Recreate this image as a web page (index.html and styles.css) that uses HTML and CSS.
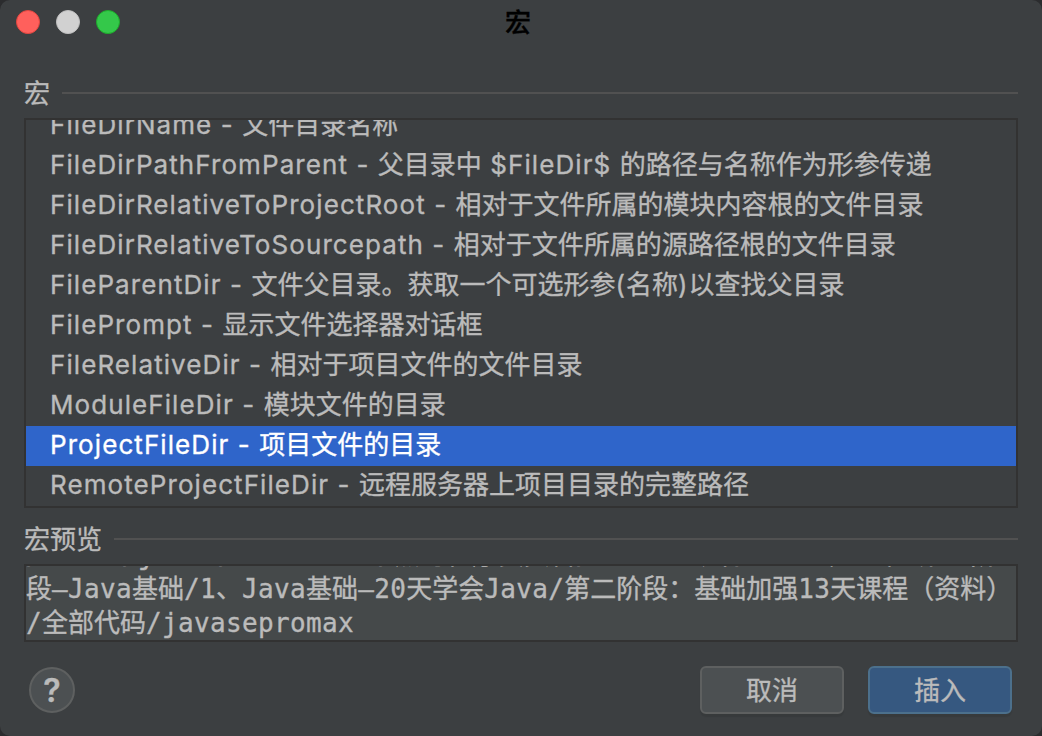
FILE: index.html
```html
<!DOCTYPE html>
<html lang="zh-CN">

<head>
    <meta charset="UTF-8">
    <meta name="viewport" content="width=device-width, initial-scale=1.0">
    <title>宏</title>
    <link rel="stylesheet" href="styles.css">
</head>

<body>
    <div class="dialog">
        <div class="titlebar">
            <div class="lights">
                <span class="light close"></span>
                <span class="light minimize"></span>
                <span class="light zoom"></span>
            </div>
            <h1>宏</h1>
        </div>

        <div class="section-title"><h2>宏</h2></div>
        <ul class="macro-list">
            <li><span class="name">FileDirName - </span>文件目录名称</li>
            <li><span class="name">FileDirPathFromParent - </span>父目录中<span class="name"> $FileDir$ </span>的路径与名称作为形参传递</li>
            <li><span class="name">FileDirRelativeToProjectRoot - </span>相对于文件所属的模块内容根的文件目录</li>
            <li><span class="name">FileDirRelativeToSourcepath - </span>相对于文件所属的源路径根的文件目录</li>
            <li><span class="name">FileParentDir - </span>文件父目录。获取一个可选形参<span class="name">(</span>名称<span class="name">)</span>以查找父目录</li>
            <li><span class="name">FilePrompt - </span>显示文件选择器对话框</li>
            <li><span class="name">FileRelativeDir - </span>相对于项目文件的文件目录</li>
            <li><span class="name">ModuleFileDir - </span>模块文件的目录</li>
            <li class="selected"><span class="name">ProjectFileDir - </span>项目文件的目录</li>
            <li><span class="name">RemoteProjectFileDir - </span>远程服务器上项目目录的完整路径</li>
        </ul>

        <div class="section-title preview-title"><h2>宏预览</h2></div>
        <div class="preview">
            <div><span class="code">/Users/jiexi/Documents/</span>黑马程序员资料<span class="code">/Java</span>全套课<span class="code">/Java</span>零基础到第一阶</div>
            <div>段<span class="code">—Java</span>基础<span class="code">/1</span>、<span class="code">Java</span>基础<span class="code">—20</span>天学会<span class="code">Java/</span>第二阶段：基础加强<span class="code">13</span>天课程（资料）</div>
            <div><span class="code">/</span>全部代码<span class="code">/javasepromax</span></div>
        </div>

        <div class="footer">
            <button class="help">?</button>
            <div class="actions">
                <button class="btn">取消</button>
                <button class="btn primary">插入</button>
            </div>
        </div>
    </div>
</body>

</html>
```
FILE: styles.css
```css
body {
    margin: 0;
    background: #2b2c2e;
    font-family: Inter, 'Noto Sans CJK SC', sans-serif;
    font-size: 26px;
    color: #bbbbbb;
    -webkit-text-stroke: 0.35px;
}

.dialog {
    display: flex;
    flex-direction: column;
    box-sizing: border-box;
    width: 1042px;
    height: 736px;
    padding: 0 24px;
    border-radius: 10px;
    background-color: #3c3f41;
    overflow: hidden;
}

.titlebar {
    display: grid;
    grid-template-columns: 1fr auto 1fr;
    align-items: center;
    height: 44px;
    margin: 0 -6px 0 -8px;
}

.lights {
    display: flex;
    gap: 16px;
}

.light {
    box-sizing: border-box;
    width: 24px;
    height: 24px;
    border-radius: 50%;
}

.close {
    background-color: #ff605c;
    border: 1px solid #e2463f;
}

.minimize {
    background-color: #d1d1d1;
    border: 1px solid #bfbfbf;
}

.zoom {
    background-color: #34c84a;
    border: 1px solid #1dad2b;
}

h1 {
    margin: 0 4px 0 0;
    padding-top: 2px;
    font-size: 26px;
    font-weight: 500;
    line-height: 40px;
    color: #000;
}

.section-title {
    display: flex;
    align-items: center;
    gap: 12px;
    height: 40px;
    margin-top: 29px;
    margin-bottom: 5px;
}

.section-title::after {
    content: '';
    flex: 1;
    height: 2px;
    background-color: #515151;
}

h2 {
    margin: 0;
    padding-top: 1px;
    font-size: 26px;
    font-weight: normal;
    line-height: 40px;
}

.macro-list {
    display: flex;
    flex-direction: column;
    justify-content: flex-end;
    box-sizing: border-box;
    height: 390px;
    margin: 0;
    padding: 0;
    border: 2px solid #323232;
    list-style: none;
    overflow: hidden;
}

.macro-list li {
    flex: none;
    height: 40px;
    padding-left: 24px;
    line-height: 38px;
    white-space: pre;
}

.macro-list .selected {
    background-color: #2f65ca;
    color: #fff;
}

.name {
    letter-spacing: 1.08px;
}

.preview-title {
    margin-top: 11px;
}

.preview {
    display: flex;
    flex-direction: column;
    justify-content: flex-end;
    box-sizing: border-box;
    height: 78px;
    border: 2px solid #323232;
    background-color: #45494a;
    font-family: 'DejaVu Sans Mono', 'Noto Sans CJK SC', monospace;
    line-height: 34px;
    white-space: nowrap;
    overflow: hidden;
}

.preview div {
    flex: none;
    height: 34px;
}

.code {
    letter-spacing: 0.35px;
}

.footer {
    display: flex;
    justify-content: space-between;
    align-items: center;
    margin: 24px -18px 0 5px;
    padding-right: 24px;
}

.actions {
    display: flex;
    gap: 24px;
}

button {
    box-sizing: border-box;
    padding: 0;
    border: 2px solid #5e6060;
    background-color: #4c5052;
    color: #bbbbbb;
    font-family: inherit;
    font-size: 26px;
}

.help {
    width: 46px;
    height: 46px;
    padding-top: 1px;
    border-radius: 50%;
    font-size: 32px;
    font-weight: 600;
    line-height: 40px;
}

.btn {
    width: 144px;
    height: 48px;
    padding-top: 2px;
    border-radius: 6px;
    line-height: 40px;
    box-shadow: 0 3px 1px rgba(0, 0, 0, 0.08);
}

.primary {
    background-color: #365880;
    border-color: #4c708c;
}
```
